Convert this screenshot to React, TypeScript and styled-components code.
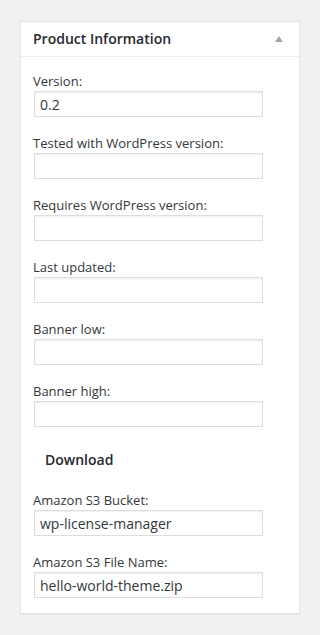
import React from "react";
import styled, { createGlobalStyle } from "styled-components";

const GlobalStyle = createGlobalStyle`
  html, body {
    margin: 0;
    padding: 0;
    background: #f1f1f1;
  }
  body {
    font-family: "Open Sans", "Liberation Sans", sans-serif;
    color: #444;
  }
`;

const Page = styled.div`
  padding: 21px 20px 20px 20px;
`;

const Postbox = styled.div`
  width: 278px;
  background: #fff;
  border: 1px solid #e5e5e5;
  box-shadow: 0 1px 1px rgba(0, 0, 0, 0.04);
`;

const Header = styled.div`
  display: flex;
  align-items: center;
  justify-content: space-between;
  height: 34px;
  padding: 0 16px 0 12px;
  border-bottom: 1px solid #eee;
`;

const Title = styled.h2`
  margin: 0;
  font-size: 14px;
  font-weight: 600;
  color: #23282d;
  line-height: 1.4;
`;

const Toggle = styled.span`
  width: 0;
  height: 0;
  border-left: 4px solid transparent;
  border-right: 4px solid transparent;
  border-bottom: 6px solid #a0a5aa;
`;

const Body = styled.div`
  padding: 14px 12px 15px 12px;
`;

const Field = styled.div`
  display: flex;
  flex-direction: column;
  & + & {
    margin-top: 16px;
  }
`;

const Label = styled.label`
  font-size: 13px;
  line-height: 20px;
  color: #32373c;
`;

const Input = styled.input`
  box-sizing: border-box;
  width: 229px;
  height: 26px;
  margin-left: 1px;
  padding: 0 5px;
  border: 1px solid #ddd;
  box-shadow: inset 0 1px 2px rgba(0, 0, 0, 0.07);
  font-family: "Open Sans", "Liberation Sans", sans-serif;
  font-size: 14px;
  color: #32373c;
  background: #fff;
  outline: none;
`;

const Section = styled.h3`
  margin: 23px 0 20px 12px;
  font-size: 14px;
  font-weight: 600;
  line-height: 20px;
  color: #23282d;
`;

const infoFields = [
  { label: "Version:", value: "0.2" },
  { label: "Tested with WordPress version:", value: "" },
  { label: "Requires WordPress version:", value: "" },
  { label: "Last updated:", value: "" },
  { label: "Banner low:", value: "" },
  { label: "Banner high:", value: "" },
];

const downloadFields = [
  { label: "Amazon S3 Bucket:", value: "wp-license-manager" },
  { label: "Amazon S3 File Name:", value: "hello-world-theme.zip" },
];

const App: React.FC = () => {
  return (
    <Page>
      <GlobalStyle />
      <Postbox>
        <Header>
          <Title>Product Information</Title>
          <Toggle />
        </Header>
        <Body>
          {infoFields.map((f) => (
            <Field key={f.label}>
              <Label>{f.label}</Label>
              <Input type="text" defaultValue={f.value} />
            </Field>
          ))}
          <Section>Download</Section>
          {downloadFields.map((f) => (
            <Field key={f.label}>
              <Label>{f.label}</Label>
              <Input type="text" defaultValue={f.value} />
            </Field>
          ))}
        </Body>
      </Postbox>
    </Page>
  );
};

export default App;
